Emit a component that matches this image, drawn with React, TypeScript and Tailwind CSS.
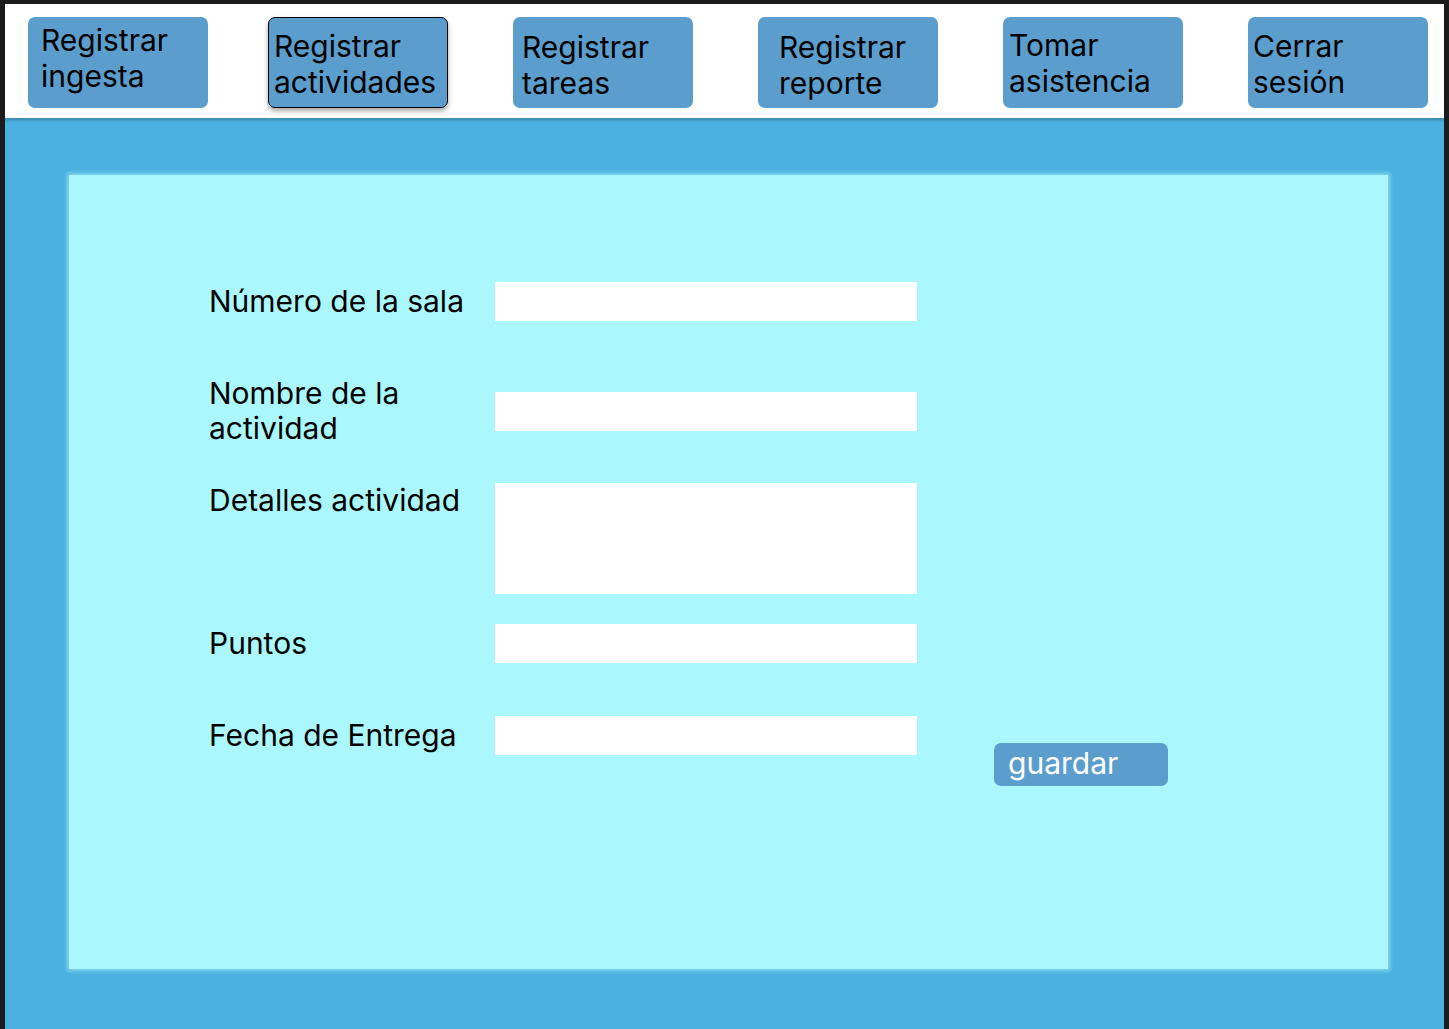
import React from "react";

const font = { fontFamily: "Inter, 'Noto Sans', sans-serif" };

const navItems = [
  { lines: ["Registrar", "ingesta"], cls: "pt-[5px] pl-[13px]" },
  { lines: ["Registrar", "actividades"], cls: "-ml-[5px] pt-[10px] pl-[5px] border border-black shadow-[0_3px_5px_rgba(0,0,0,0.35)]" },
  { lines: ["Registrar", "tareas"], cls: "pt-[12px] pl-[9px]" },
  { lines: ["Registrar", "reporte"], cls: "pt-[12px] pl-[21px]" },
  { lines: ["Tomar", "asistencia"], cls: "pt-[10px] pl-[6px]" },
  { lines: ["Cerrar", "sesión"], cls: "pt-[11px] pl-[5px]" },
];

function Field({ label, tall }: { label: React.ReactNode; tall?: boolean }) {
  return (
    <div className={`flex ${tall ? "items-start" : "items-center"}`}>
      <div className="w-[286px] text-[30px] leading-[35px] text-black">{label}</div>
      <div className={`w-[422px] bg-white ${tall ? "h-[111px]" : "h-[39px]"}`} />
    </div>
  );
}

export default function App() {
  return (
    <div className="h-[1029px] bg-[#1c1c1c] pt-[4px] px-[5px] overflow-hidden" style={font}>
      <div className="h-full flex flex-col bg-[#4ab1e0]">
        {/* Header */}
        <div className="h-[114px] flex-shrink-0 bg-white pt-[13px] pl-[23px] flex gap-[65px] shadow-[0_2px_3px_rgba(0,0,0,0.25)] relative z-10">
          {navItems.map((n, i) => (
            <button
              key={i}
              className={`w-[180px] h-[91px] rounded-[7px] bg-[#5b9ecd] text-left flex flex-col items-start justify-start text-[30px] leading-[36px] text-black ${n.cls}`}
            >
              {n.lines.map(l => <span key={l}>{l}</span>)}
            </button>
          ))}
        </div>

        {/* Body */}
        <div className="flex-1 pt-[57px] pl-[64px] pr-[56px]">
          <div className="h-[794px] bg-[#aaf8fe] shadow-[0_0_4px_2px_#86d8ee] pt-[107px] pl-[140px]">
            <Field label="Número de la sala" />
            <div className="mt-[55px]">
              <Field label={<>Nombre de la<br />actividad</>} />
            </div>
            <div className="mt-[37px]">
              <Field label="Detalles actividad" tall />
            </div>
            <div className="mt-[30px]">
              <Field label="Puntos" />
            </div>
            <div className="mt-[53px] flex items-start">
              <Field label="Fecha de Entrega" />
              <button className="ml-[77px] mt-[27px] w-[174px] h-[43px] rounded-[7px] bg-[#5b9ecd] text-white text-[30px] leading-[36px] text-left pl-[14px] pb-[4px]">
                guardar
              </button>
            </div>
          </div>
        </div>
      </div>
    </div>
  );
}
